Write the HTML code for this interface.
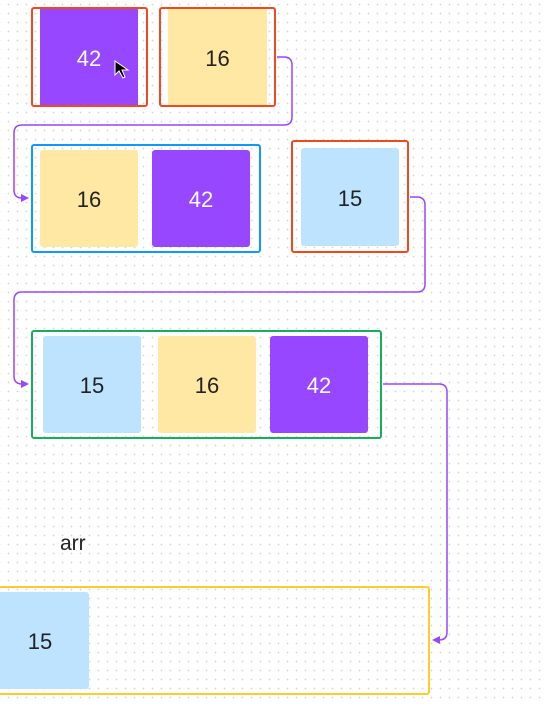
<!DOCTYPE html>
<html><head><style>
html,body{margin:0;padding:0}
body{width:546px;height:705px;overflow:hidden;position:relative;background:#fff;
background-image:radial-gradient(circle,#d6d6d6 0.7px,transparent 1px);background-size:9px 9px;background-position:4px 0px;
font-family:"Liberation Sans",sans-serif}
.b{position:absolute;box-sizing:border-box;border:2px solid;border-radius:3px}
.c{position:absolute;border-radius:3px;display:flex;align-items:center;justify-content:center;font-size:22px;color:#222;padding-top:3px;box-sizing:border-box}
.p{background:#9747ff;color:#fff}
.y{background:#ffe8a3}
.l{background:#bde3ff}
svg{position:absolute;left:0;top:0}
</style></head><body>
<div class="c p" style="left:40px;top:9px;width:98px;height:96px;border-radius:0">42</div>
<div class="b" style="left:31px;top:7px;width:117px;height:100px;border-color:#f24822"></div>
<div class="c y" style="left:168px;top:9px;width:99px;height:96px;border-radius:0">16</div>
<div class="b" style="left:159px;top:7px;width:117px;height:100px;border-color:#f24822"></div>

<div class="b" style="left:31px;top:144px;width:230px;height:109px;border-color:#0d99ff"></div>
<div class="c y" style="left:40px;top:150px;width:98px;height:97px">16</div>
<div class="c p" style="left:152px;top:150px;width:98px;height:97px">42</div>

<div class="b" style="left:291px;top:140px;width:118px;height:113px;border-color:#f24822"></div>
<div class="c l" style="left:301px;top:148px;width:98px;height:98px">15</div>

<div class="b" style="left:31px;top:330px;width:351px;height:109px;border-color:#14ae5c"></div>
<div class="c l" style="left:43px;top:336px;width:98px;height:97px">15</div>
<div class="c y" style="left:158px;top:336px;width:98px;height:97px">16</div>
<div class="c p" style="left:270px;top:336px;width:98px;height:97px">42</div>

<div style="position:absolute;left:60px;top:532px;font-size:21px;color:#222">arr</div>

<div class="b" style="left:-4px;top:586px;width:434px;height:109px;border-color:#ffcd29"></div>
<div class="c l" style="left:-4px;top:592px;width:93px;height:97px;border-radius:0 3px 3px 0;padding-right:5px">15</div>

<svg width="546" height="705" fill="none" stroke="#9747ff" stroke-width="1.5">
<path d="M277 57 H284 Q292 57 292 65 V117 Q292 125 284 125 H22 Q14 125 14 133 V190 Q14 198 22 198 H24"/>
<path d="M410 197 H417 Q425 197 425 205 V284 Q425 292 417 292 H22 Q14 292 14 300 V376 Q14 384 22 384 H24"/>
<path d="M383 384 H439 Q447 384 447 392 V632 Q447 640 439 640 H438"/>
<path d="M21 194 L29 198 L21 202Z" fill="#9747ff" stroke="none"/>
<path d="M21 380 L29 384 L21 388Z" fill="#9747ff" stroke="none"/>
<path d="M440 636 L432 640 L440 644Z" fill="#9747ff" stroke="none"/>
<path d="M115 61 L115 75 L119 71 L123 78 L125 77 L122 70 L128 70 Z" fill="#000" stroke="#fff" stroke-width="1"/>
</svg>
</body></html>
